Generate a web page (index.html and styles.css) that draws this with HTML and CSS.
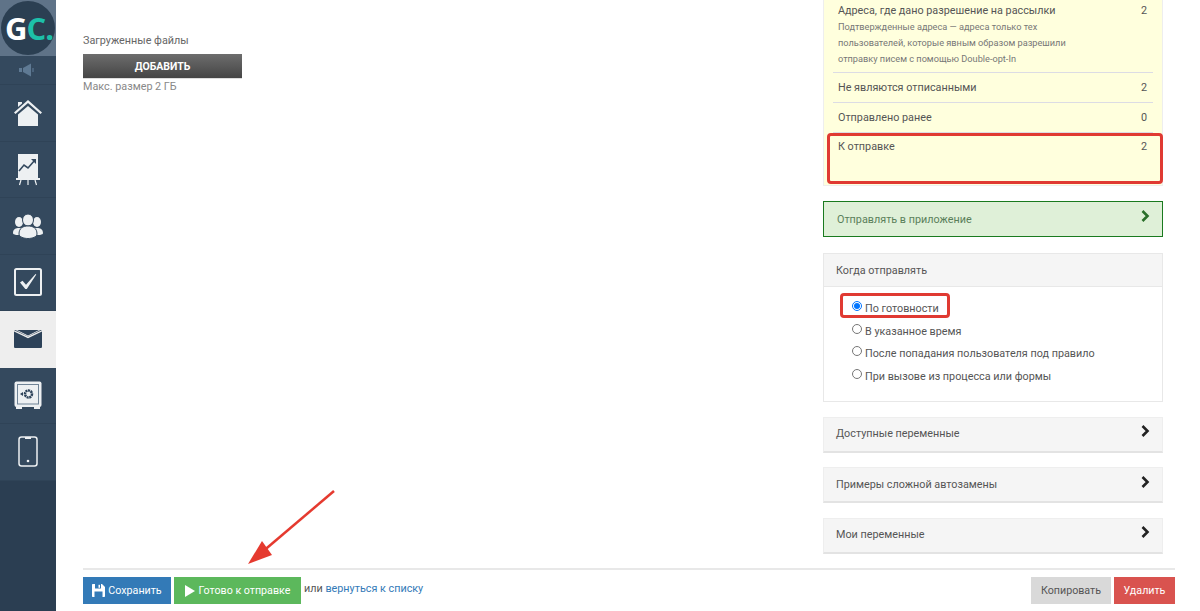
FILE: index.html
```html
<!DOCTYPE html>
<html lang="ru">
<head>
<meta charset="utf-8">
<title>Рассылка</title>
<link rel="stylesheet" href="styles.css">
</head>
<body>
<div class="app">
  <nav class="sidebar">
    <div class="logo-row">
      <div class="logo"><span class="logo-g">G</span><span class="logo-c">C</span><span class="logo-dot">.</span></div>
    </div>
    <div class="nav-item nav-sound">
      <svg width="20" height="14" viewBox="0 0 20 14"><rect x="1" y="5" width="3" height="4" fill="#5f7a94"/><path d="M5 5l8-4.500v13L5 9z" fill="#5f7a94"/><rect x="14" y="5" width="2" height="4" fill="#4a637c"/></svg>
    </div>
    <div class="nav-item">
      <svg width="30" height="28" viewBox="0 0 30 28"><path d="M1 13.500 15 1l14 12.500-1.500 1.500L15 4 2.500 15z" fill="#edf0f2"/><path d="M5 3h4v1.500L5 8z" fill="#edf0f2"/><path d="M5 15.500 15 7l10 8.500V27H5z" fill="#edf0f2"/></svg>
    </div>
    <div class="nav-item">
      <svg width="24" height="33" viewBox="0 0 24 33"><rect x="2" y="1" width="20" height="24" fill="#edf0f2"/><path d="M3 18l5-6 4 3 7-8" fill="none" stroke="#34495e" stroke-width="1.600"/><path d="M15 6h5v5z" fill="#34495e"/><rect x="0" y="25" width="24" height="2" fill="#edf0f2"/><path d="M5 27l-1.500 5M19 27l1.500 5M12 27v5" stroke="#edf0f2" stroke-width="1.200"/></svg>
    </div>
    <div class="nav-item">
      <svg width="30" height="26" viewBox="0 0 30 26"><ellipse cx="6" cy="9" rx="4" ry="5" fill="#edf0f2"/><ellipse cx="24" cy="9" rx="4" ry="5" fill="#edf0f2"/><path d="M0 20c0-4 3-5 6-5s4 1 4 3v4l-7 0c-2-.500-3-1-3-2zM30 20c0-4-3-5-6-5s-4 1-4 3v4l7 0c2-.500 3-1 3-2z" fill="#edf0f2"/><ellipse cx="15" cy="7" rx="5.500" ry="6" fill="#edf0f2" stroke="#34495e"/><path d="M6 21c0-6 4-8 9-8s9 2 9 8c0 3-5 4.500-9 4.500S6 24 6 21z" fill="#edf0f2" stroke="#34495e"/></svg>
    </div>
    <div class="nav-item">
      <svg width="28" height="28" viewBox="0 0 28 28"><rect x="1" y="1" width="26" height="26" rx="1.500" fill="none" stroke="#edf0f2" stroke-width="2"/><path d="M6 14.500l2.500-1.800 3.500 4L21.500 6l.8.500L12.800 21h-1.500z" fill="#edf0f2"/></svg>
    </div>
    <div class="nav-item nav-active">
      <svg width="28" height="18" viewBox="0 0 28 18"><path d="M0 1.500C0 .500.500 0 1.500 0L14 6.500 26.500 0C27.500 0 28 .500 28 1.500V16.500c0 1-.500 1.500-1.500 1.500h-25C.500 18 0 17.500 0 16.500z" fill="#2d4259"/><path d="M3 0h22l-11 5.500z" fill="#2d4259"/><path d="M0 .800 14 7.500 28 .800" fill="none" stroke="#eeeeee" stroke-width="1.400"/></svg>
    </div>
    <div class="nav-item">
      <svg width="28" height="28" viewBox="0 0 28 28"><rect x="0.500" y="0.500" width="27" height="25.500" rx="2" fill="#edf0f2"/><rect x="3.500" y="3.500" width="21" height="19.500" fill="#edf0f2" stroke="#6f8396"/><rect x="2" y="26" width="6" height="2" fill="#edf0f2"/><rect x="20" y="26" width="6" height="2" fill="#edf0f2"/><circle cx="14.500" cy="13" r="3.500" fill="none" stroke="#2d4259" stroke-width="2.500" stroke-dasharray="2 .6"/><path d="M6 13l3-2v4z" fill="#2d4259"/></svg>
    </div>
    <div class="nav-item">
      <svg width="20" height="31" viewBox="0 0 20 31"><rect x="1" y="1" width="18" height="29" rx="2.500" fill="none" stroke="#edf0f2" stroke-width="1.500"/><rect x="7" y="1" width="6" height="2" fill="#edf0f2"/><circle cx="10" cy="25" r="1.300" fill="#edf0f2"/></svg>
    </div>
  </nav>

  <main class="main">
    <div class="content">
      <section class="files">
        <div class="files-label">Загруженные файлы</div>
        <button class="add-btn">ДОБАВИТЬ</button>
        <div class="files-hint">Макс. размер 2 ГБ</div>
      </section>

      <aside class="side">
        <div class="stats">
          <div class="stat stat-tall">
            <div class="stat-line"><span>Адреса, где дано разрешение на рассылки</span><span>2</span></div>
            <p class="stat-note">Подтвержденные адреса — адреса только тех<br>пользователей, которые явным образом разрешили<br>отправку писем с помощью Double-opt-In</p>
          </div>
          <div class="stat"><div class="stat-line"><span>Не являются отписанными</span><span>2</span></div></div>
          <div class="stat"><div class="stat-line"><span>Отправлено ранее</span><span>0</span></div></div>
          <div class="stat stat-last"><div class="stat-line"><span>К отправке</span><span>2</span></div></div>
        </div>

        <div class="panel panel-green">
          <span>Отправлять в приложение</span>
          <svg class="chev" width="9" height="12" viewBox="0 0 9 12"><path d="M1.500 1 6.500 6l-5 5" fill="none" stroke="currentColor" stroke-width="2.600"/></svg>
        </div>

        <div class="when">
          <div class="when-head">Когда отправлять</div>
          <div class="when-body">
            <label class="radio"><input type="radio" name="when" checked><span>По готовности</span></label>
            <label class="radio"><input type="radio" name="when"><span>В указанное время</span></label>
            <label class="radio"><input type="radio" name="when"><span>После попадания пользователя под правило</span></label>
            <label class="radio"><input type="radio" name="when"><span>При вызове из процесса или формы</span></label>
          </div>
        </div>

        <div class="panel panel-gray">
          <span>Доступные переменные</span>
          <svg class="chev" width="9" height="12" viewBox="0 0 9 12"><path d="M1.500 1 6.500 6l-5 5" fill="none" stroke="currentColor" stroke-width="2.600"/></svg>
        </div>
        <div class="panel panel-gray">
          <span>Примеры сложной автозамены</span>
          <svg class="chev" width="9" height="12" viewBox="0 0 9 12"><path d="M1.500 1 6.500 6l-5 5" fill="none" stroke="currentColor" stroke-width="2.600"/></svg>
        </div>
        <div class="panel panel-gray">
          <span>Мои переменные</span>
          <svg class="chev" width="9" height="12" viewBox="0 0 9 12"><path d="M1.500 1 6.500 6l-5 5" fill="none" stroke="currentColor" stroke-width="2.600"/></svg>
        </div>
      </aside>
    </div>

    <footer class="footer">
      <button class="btn btn-blue">
        <svg width="13" height="13" viewBox="0 0 13 13"><path d="M0 1c0-.600.400-1 1-1h9l3 3v9c0 .600-.400 1-1 1H1c-.600 0-1-.400-1-1z" fill="#fff"/><rect x="3" y="0" width="6" height="4.500" fill="#337ab7"/><rect x="6.500" y="0.800" width="1.500" height="3" fill="#fff"/><rect x="2.500" y="7.500" width="8" height="5.500" fill="#337ab7"/></svg>
        Сохранить
      </button>
      <button class="btn btn-green">
        <svg width="10" height="12" viewBox="0 0 10 12"><path d="M0 0 10 6 0 12z" fill="#fff"/></svg>
        Готово к отправке
      </button>
      <span class="back">или <a href="#">вернуться к списку</a></span>
      <span class="footer-spacer"></span>
      <button class="btn btn-gray">Копировать</button>
      <button class="btn btn-red">Удалить</button>
    </footer>
  </main>
</div>

<div class="mark mark-send"></div>
<div class="mark mark-ready"></div>
<svg class="arrow" width="100" height="84" viewBox="0 0 100 84"><path d="M89 2 16 64" stroke="#e53a2f" stroke-width="2.500" fill="none"/><path d="M3 75 17 52 27 66z" fill="#e53a2f"/></svg>
</body>
</html>
```

FILE: styles.css
```css
* { box-sizing: border-box; }
html, body { margin: 0; height: 611px; overflow: hidden; background: #fff; }
body { font-family: Roboto, "Liberation Sans", sans-serif; font-size: 12px; color: #555; position: relative; }
button { font-family: inherit; cursor: pointer; }

.app { display: flex; height: 611px; }

.sidebar { width: 56px; flex: none; background: #2b3e52; display: flex; flex-direction: column; align-items: stretch; }
.logo-row { height: 56px; background: #5f7388; display: flex; align-items: center; justify-content: center; }
.logo { width: 54px; height: 54px; padding-left: 2px; border-radius: 50%; background: #2b3f52; display: flex; align-items: center; justify-content: center; font-family: "Open Sans", sans-serif; font-weight: 700; font-size: 31px; letter-spacing: -1px; line-height: 1; }
.logo-g { color: #fff; }
.logo-c { color: #1dbfa9; }
.logo-dot { color: #1dbfa9; }
.nav-item { height: 56.500px; display: flex; align-items: center; justify-content: center; background: #34495e; border-bottom: 1px solid #2f4357; }
.nav-sound { height: 29px; }
.nav-active { background: #eeeeee; border-bottom-color: #eeeeee; }

.main { flex: 1; min-width: 0; display: flex; flex-direction: column; padding: 0 25px 0 27px; }
.content { flex: 1; display: flex; justify-content: space-between; min-height: 0; }

.files { width: 159px; padding-top: 33px; }
.files-label { font-size: 10.800px; line-height: 15px; color: #666; margin-bottom: 6px; white-space: nowrap; }
.add-btn { display: block; width: 159px; height: 25px; padding: 0; border: 0; border-bottom: 1px solid #ddd; background: linear-gradient(#6d6d6d, #454545); color: #fff; font-size: 10.500px; font-weight: 700; }
.files-hint { font-size: 10.800px; line-height: 15px; color: #888; white-space: nowrap; }

.side { width: 340px; margin-right: 12px; display: flex; flex-direction: column; }

.stats { height: 186px; padding: 0 9px; background: #ffffdd; border: 1px solid #eeeeee; border-top: 0; }
.stat { padding: 7px 6px 0 5px; border-bottom: 1px solid #dcdce4; height: 30px; font-size: 10.800px; line-height: 15px; color: #555; }
.stat-tall { height: 73px; padding-top: 3px; }
.stat-last { border-bottom: 0; padding-top: 6px; }
.stat-line { display: flex; justify-content: space-between; }
.stat-note { margin: 1px 0 0; font-size: 9.200px; line-height: 16px; color: #777; white-space: nowrap; }

.panel { display: flex; justify-content: space-between; height: 36px; padding: 8.500px 12px 0 12px; margin-top: 15px; font-size: 10.800px; line-height: 16px; }
.panel-green { background: #dff0d8; border: 1px solid #1a7a1f; color: #5a7f5a; margin-top: 15px; padding-top: 10px; padding-left: 13px; }
.panel-green .chev { color: #2a6f2a; margin-top: -2px; }
.panel-gray { background: #f5f5f5; border: 1px solid #eeeeee; border-bottom: 2px solid #e3e3e3; color: #555; margin-top: 14.500px; }
.panel-gray .chev { color: #222; margin-top: -1px; }

.when { height: 149px; margin-top: 16px; border: 1px solid #e8e8e8; }
.when-head { height: 33px; padding: 9px 12px 0; background: #f5f5f5; border-bottom: 1px solid #e8e8e8; font-size: 10.800px; line-height: 16px; color: #555; }
.when-body { padding: 14px 0 0 28px; display: flex; flex-direction: column; gap: 6.500px; }
.radio { display: flex; align-items: flex-start; height: 16px; font-size: 10.800px; line-height: 16px; color: #555; }
.radio input { width: 10px; height: 10px; margin: 0 3px 0 0; flex: none; }

.footer { height: 43px; flex: none; display: flex; align-items: flex-start; gap: 3px; padding-top: 7px; border-top: 2px solid #e8e8e8; }
.btn { height: 27px; border: 0; padding: 0; font-size: 10.700px; display: flex; align-items: center; justify-content: center; gap: 3px; }
.btn-blue { width: 88px; background: #337ab7; color: #fff; }
.btn-green { width: 127px; background: #5cb85c; color: #fff; gap: 4px; }
.btn-gray { width: 80px; background: #d9d9d9; color: #555; }
.btn-red { width: 61px; background: #d9534f; color: #fff; }
.back { font-size: 10.800px; line-height: 24px; white-space: nowrap; color: #555; }
.back a { color: #337ab7; text-decoration: none; }
.footer-spacer { flex: 1; }

.mark { position: absolute; border: 3px solid #e03a32; border-radius: 4px; }
.mark-send { left: 827px; top: 133px; width: 336px; height: 51px; }
.mark-ready { left: 840px; top: 293px; width: 110px; height: 25px; }
.arrow { position: absolute; left: 245px; top: 489px; }
```
